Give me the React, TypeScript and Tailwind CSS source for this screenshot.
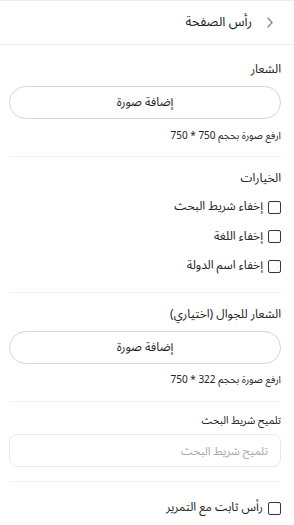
function CheckRow({ label }: { label: string }) {
  return (
    <label className="flex h-[20px] items-center gap-[5px]">
      <span className="h-[13px] w-[13px] shrink-0 rounded-[2px] border-[1.5px] border-[#3f2d55] bg-white" />
      <span className="text-[12px] leading-[20px] text-[#222]">{label}</span>
    </label>
  );
}

function UploadButton() {
  return (
    <button className="flex h-[33px] w-full items-center justify-center rounded-full border border-[#d6d3de] bg-white text-[12px] text-[#222]">
      إضافة صورة
    </button>
  );
}

export default function App() {
  return (
    <div
      dir="rtl"
      className="min-h-[525px] w-[294px] border-t border-[#efefef] bg-white font-['Noto_Sans_Arabic','Noto_Sans',sans-serif]"
    >
      {/* Header: back chevron sits on the far right */}
      <div dir="ltr" className="flex h-[44px] items-center justify-end gap-[15px] border-b border-[#ececec] pr-[21px]">
        <span dir="rtl" className="text-[13px] text-[#222]">رأس الصفحة</span>
        <svg width="6" height="11" viewBox="0 0 6 11" fill="none" className="text-[#8b82a0]">
          <path d="M1 1l4 4.5L1 10" stroke="currentColor" strokeWidth="1.3" strokeLinecap="round" strokeLinejoin="round" />
        </svg>
      </div>

      <div className="pl-[9px] pr-[13px]">
        {/* Logo */}
        <div className="border-b border-[#f0f0f0] pb-[12px] pt-[15px]">
          <div className="text-[12px] leading-[20px] text-[#222]">الشعار</div>
          <div className="mt-[6px]">
            <UploadButton />
          </div>
          <div className="mt-[9px] text-[10px] leading-[16px] text-[#222]">ارفع صورة بحجم 750 * 750</div>
        </div>

        {/* Options */}
        <div className="border-b border-[#f0f0f0] pb-[16px] pt-[12px]">
          <div className="text-[12px] leading-[20px] text-[#222]">الخيارات</div>
          <div className="mt-[8px] flex flex-col gap-[9.5px]">
            <CheckRow label="إخفاء شريط البحث" />
            <CheckRow label="إخفاء اللغة" />
            <CheckRow label="إخفاء اسم الدولة" />
          </div>
        </div>

        {/* Mobile logo */}
        <div className="border-b border-[#f0f0f0] pb-[13px] pt-[12px]">
          <div className="text-[12px] leading-[20px] text-[#222]">الشعار للجوال (اختياري)</div>
          <div className="mt-[6px]">
            <UploadButton />
          </div>
          <div className="mt-[8px] text-[10px] leading-[16px] text-[#222]">ارفع صورة بحجم 322 * 750</div>
        </div>

        {/* Search hint */}
        <div className="border-b border-[#f0f0f0] pb-[14px] pt-[11px]">
          <div className="text-[10.5px] leading-[16px] text-[#222]">تلميح شريط البحث</div>
          <input
            placeholder="تلميح شريط البحث"
            className="mt-[5px] h-[33px] w-full rounded-[8px] border border-[#e8e8ec] px-[12px] text-[11.5px] text-[#222] outline-none placeholder:text-[#a8a8ad]"
          />
        </div>

        <div className="pt-[16px]">
          <CheckRow label="رأس ثابت مع التمرير" />
        </div>
      </div>
    </div>
  );
}
